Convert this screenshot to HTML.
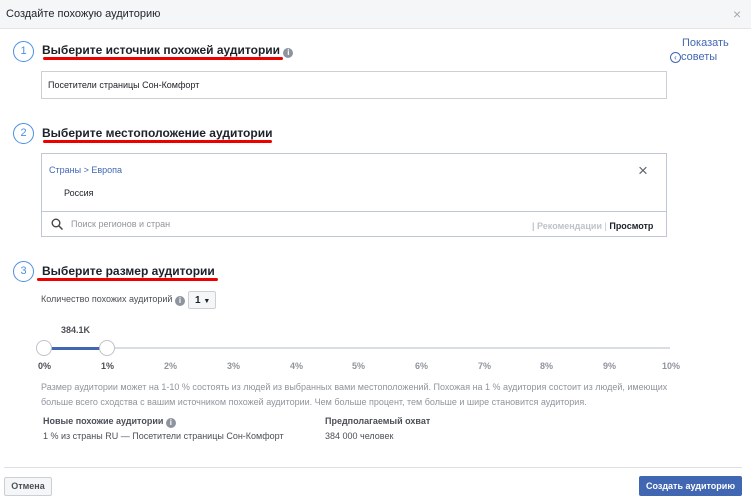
<!DOCTYPE html>
<html><head><meta charset="utf-8"><style>
*{margin:0;padding:0;box-sizing:border-box}
body{width:751px;height:504px;background:#fff;font-family:"Liberation Sans",sans-serif;color:#1d2129;position:relative;overflow:hidden;font-size:11px}
.a{position:absolute;white-space:nowrap}
.hdr{position:absolute;left:0;top:0;width:751px;height:29px;background:#f5f6f7;border-bottom:1px solid #e5e5e5}
.circ{position:absolute;width:21px;height:21px;border:1.5px solid #4a90e2;border-radius:50%;color:#4a90e2;font-size:11px;text-align:center;line-height:18px}
.ttl{font-size:12px;font-weight:bold;letter-spacing:0}
.red{position:absolute;height:3px;background:#e00;border-radius:2px}
.box{position:absolute;border:1px solid #ccd0d5}
.tick{position:absolute;top:361px;font-size:9px;color:#90949c;font-weight:bold}
.knob{position:absolute;top:340px;width:16px;height:16px;border-radius:50%;background:#fff;border:1px solid #bec2c9}
.info{display:inline-block;width:10px;height:10px;border-radius:50%;background:#8d949e;color:#fff;font-size:8px;line-height:10px;text-align:center;font-weight:bold;vertical-align:-1px}
</style></head><body>
<div class="hdr"></div>
<div class="a" style="left:6px;top:8px;font-size:11px;color:#1d2129">Создайте похожую аудиторию</div>
<div class="a" style="left:733px;top:6px;font-size:14px;color:#aaa">×</div>

<div class="circ" style="left:13px;top:41px">1</div>
<div class="a ttl" style="left:42px;top:43px">Выберите источник похожей аудитории <span class="info">i</span></div>
<div class="red" style="left:43px;top:57px;width:240px"></div>
<div class="a" style="left:682px;top:37px;font-size:11px;color:#4267b2">Показать</div>
<div class="a" style="left:670px;top:51px;font-size:11px;color:#4267b2"><span style="display:inline-block;width:11px;height:11px;border:1px solid #4267b2;border-radius:50%;font-size:8px;line-height:9px;text-align:center">‹</span>советы</div>
<div class="box" style="left:41px;top:71px;width:626px;height:28px"></div>
<div class="a" style="left:48px;top:80px;font-size:9px">Посетители страницы Сон-Комфорт</div>

<div class="circ" style="left:13px;top:123px">2</div>
<div class="a ttl" style="left:42px;top:126px">Выберите местоположение аудитории</div>
<div class="red" style="left:43px;top:140px;width:229px"></div>
<div class="box" style="left:41px;top:153px;width:626px;height:84px;border-color:#bdc7d8"></div>
<div style="position:absolute;left:42px;top:211px;width:624px;height:1px;background:#bdc7d8"></div>
<div class="a" style="left:49px;top:165px;font-size:9px;color:#4267b2">Страны &gt; Европа</div>
<div class="a" style="left:64px;top:188px;font-size:9px">Россия</div>
<div class="a" style="left:638px;top:161px;font-size:17px;color:#606770">×</div>
<svg class="a" style="left:51px;top:218px" width="12" height="12"><circle cx="5" cy="5" r="3.8" fill="none" stroke="#444" stroke-width="1.4"/><line x1="8" y1="8" x2="11.5" y2="11.5" stroke="#444" stroke-width="1.5"/></svg>
<div class="a" style="left:71px;top:219px;font-size:9px;color:#90949c">Поиск регионов и стран</div>
<div class="a" style="left:532px;top:221px;font-size:9px;color:#bec3c9;font-weight:bold">| Рекомендации <span style="font-weight:normal">|</span> <span style="color:#1d2129">Просмотр</span></div>

<div class="circ" style="left:13px;top:261px">3</div>
<div class="a ttl" style="left:42px;top:264px">Выберите размер аудитории</div>
<div class="red" style="left:37px;top:278px;width:181px"></div>
<div class="a" style="left:41px;top:294px;font-size:9px;color:#4b4f56">Количество похожих аудиторий <span class="info">i</span></div>
<div class="box" style="left:188px;top:291px;width:28px;height:18px;border-radius:2px;background:#f5f6f7;font-size:10px;padding:3px 0 0 6px;font-weight:bold">1 <span style="font-size:7px">▼</span></div>
<div class="a" style="left:61px;top:325px;font-size:9px;font-weight:bold;color:#4b4f56">384.1K</div>
<div style="position:absolute;left:44px;top:347px;width:626px;height:2px;background:#dadde1"></div>
<div style="position:absolute;left:44px;top:347px;width:63px;height:3px;background:#4267b2"></div>
<div class="knob" style="left:36px"></div><div class="knob" style="left:99px"></div>
<div class="tick" style="left:38px;color:#4b4f56">0%</div>
<div class="tick" style="left:101px;color:#4b4f56">1%</div>
<div class="tick" style="left:164px">2%</div><div class="tick" style="left:227px">3%</div><div class="tick" style="left:290px">4%</div><div class="tick" style="left:352px">5%</div><div class="tick" style="left:415px">6%</div><div class="tick" style="left:478px">7%</div><div class="tick" style="left:540px">8%</div><div class="tick" style="left:603px">9%</div><div class="tick" style="left:662px">10%</div>
<div class="a" style="left:41px;top:380px;font-size:9px;color:#90949c;line-height:15px">Размер аудитории может на 1-10 % состоять из людей из выбранных вами местоположений. Похожая на 1 % аудитория состоит из людей, имеющих<br>больше всего сходства с вашим источником похожей аудитории. Чем больше процент, тем больше и шире становится аудитория.</div>
<div class="a" style="left:43px;top:416px;font-size:9px;font-weight:bold;color:#4b4f56">Новые похожие аудитории <span class="info">i</span></div>
<div class="a" style="left:43px;top:431px;font-size:9px;color:#4b4f56">1 % из страны RU — Посетители страницы Сон-Комфорт</div>
<div class="a" style="left:325px;top:416px;font-size:9px;font-weight:bold;color:#4b4f56">Предполагаемый охват</div>
<div class="a" style="left:325px;top:431px;font-size:9px;color:#4b4f56">384 000 человек</div>
<div style="position:absolute;left:4px;top:467px;width:738px;height:1px;background:#dddfe2"></div>
<div class="box" style="left:4px;top:477px;width:48px;height:19px;border-radius:2px;background:#f5f6f7;font-size:9px;font-weight:bold;color:#4b4f56;text-align:center;line-height:17px">Отмена</div>
<div style="position:absolute;left:639px;top:476px;width:103px;height:20px;border-radius:2px;background:#4267b2;color:#fff;font-size:9px;font-weight:bold;text-align:center;line-height:20px">Создать аудиторию</div>
</body></html>
